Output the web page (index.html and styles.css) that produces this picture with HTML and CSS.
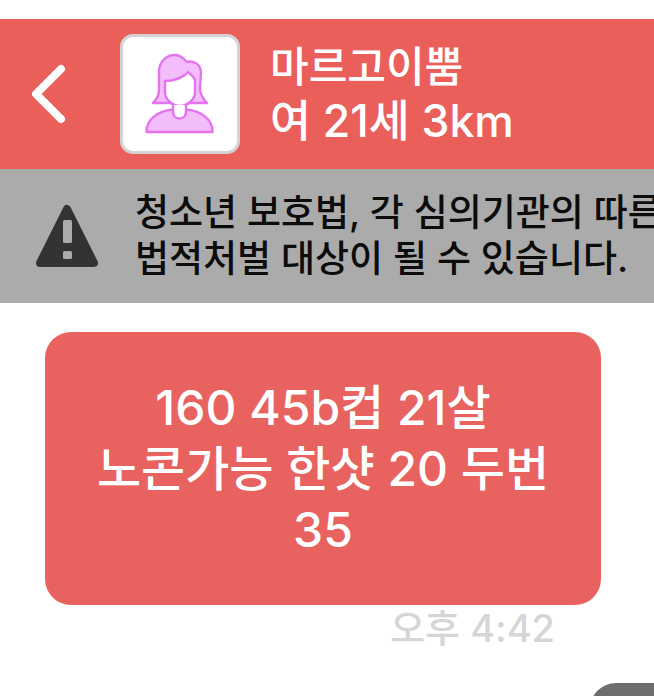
FILE: index.html
```html
<!DOCTYPE html>
<html lang="ko">
<head>
<meta charset="utf-8">
<title>채팅</title>
<link rel="stylesheet" href="styles.css">
</head>
<body>
<div class="screen">
  <header class="header">
    <svg class="back" viewBox="0 0 36 60" width="36" height="60" aria-hidden="true"><path d="M31 5 L6 30 L31 55" fill="none" stroke="#fff" stroke-width="8" stroke-linecap="round" stroke-linejoin="round"/></svg>
    <div class="avatar">
      <svg viewBox="140 49 80 90" width="80" height="90" aria-hidden="true">
        <path d="M153 103 C157 99 159 95 159 90 L159 72 C159 62 166 55 175 55 C180 55 183 58 187 62 C193 60 201 64 201 73 L200 90 C201 96 204 100 207 103 Z" fill="#f3bdfb" stroke="#e573ef" stroke-width="2.4" stroke-linejoin="round"/>
        <path d="M165 81 C173 81 183 78 188 72 C191 75 194 77 195 80 L195 92 C195 100 187 106 180 106 C173 106 165 100 165 92 Z" fill="#fff" stroke="#e573ef" stroke-width="2.4" stroke-linejoin="round"/>
        <path d="M146.500 132 C146 120 157 111 173 109.500 L186 109.500 C202 111 213 120 212.500 132 Z" fill="#f3bdfb" stroke="#e573ef" stroke-width="2.4" stroke-linejoin="round"/>
        <path d="M173 105 L173 112 C173 116 176 118.500 179.500 118.500 C183 118.500 186 116 186 112 L186 105" fill="#fff" stroke="#e573ef" stroke-width="2.4"/>
      </svg>
    </div>
    <div class="profile">
      <div class="name">마르고이뿜</div>
      <div class="meta">여 21세 3km</div>
    </div>
  </header>
  <section class="notice">
    <svg class="warn" viewBox="0 0 64 64" width="64" height="64" aria-hidden="true">
      <path d="M32 5 L59 59 L5 59 Z" fill="#333" stroke="#333" stroke-width="8" stroke-linejoin="round"/>
      <rect class="warn-mark" x="28" y="16" width="9" height="23" rx="1.500"/>
      <rect class="warn-mark" x="28" y="47" width="9" height="8" rx="1.500"/>
    </svg>
    <p class="notice-text">청소년 보호법, 각 심의기관의 따른<br>법적처벌 대상이 될 수 있습니다.</p>
  </section>
  <main class="chat">
    <div class="bubble">160 45b컵 21살<br>노콘가능 한샷 20 두번<br>35</div>
    <div class="time">오후 4:42</div>
  </main>
  <div class="next-bubble"></div>
</div>
</body>
</html>
```
FILE: styles.css
```css
html, body {
  margin: 0;
  padding: 0;
  background: #fff;
}
.screen {
  position: relative;
  width: 654px;
  height: 696px;
  overflow: hidden;
  padding-top: 19px;
  box-sizing: border-box;
  font-family: "Inter", "Noto Sans CJK KR", sans-serif;
}
.header {
  display: flex;
  align-items: center;
  height: 150px;
  background: #eb5f5b;
  padding-left: 30px;
  box-sizing: border-box;
}
.back {
  flex: none;
  margin-top: -1px;
}
.avatar {
  flex: none;
  display: flex;
  align-items: center;
  justify-content: center;
  width: 120px;
  height: 120px;
  margin-left: 54px;
  margin-top: -1px;
  box-sizing: border-box;
  background: #fff;
  border: 3px solid #d4d2d2;
  border-radius: 13px;
}
.profile {
  margin-left: 30px;
  color: #fff;
  font-weight: 500;
}
.name {
  font-size: 42px;
  line-height: 54px;
}
.meta {
  font-size: 44.500px;
  line-height: 54px;
}
.notice {
  display: flex;
  align-items: center;
  height: 134px;
  background: #ababab;
  padding-left: 35px;
  box-sizing: border-box;
  white-space: nowrap;
}
.warn {
  flex: none;
}
.warn-mark {
  fill: #ababab;
}
.notice-text {
  margin: -1px 0 0 36px;
  color: #0c0c0c;
  font-size: 37px;
  line-height: 46px;
  font-weight: 500;
}
.chat {
  padding: 29px 53px 0 45px;
}
.bubble {
  height: 273px;
  padding-top: 45px;
  box-sizing: border-box;
  background: #e8635f;
  border-radius: 26px;
  color: #fff;
  font-size: 48px;
  line-height: 61px;
  font-weight: 500;
  text-align: center;
}
.time {
  padding-right: 46px;
  text-align: right;
  color: #d6d6d6;
  font-size: 38px;
  line-height: 46px;
  font-weight: 500;
}
.next-bubble {
  position: absolute;
  left: 590px;
  top: 683px;
  width: 100px;
  height: 60px;
  background: #6e6e6e;
  border-radius: 26px;
}
```
